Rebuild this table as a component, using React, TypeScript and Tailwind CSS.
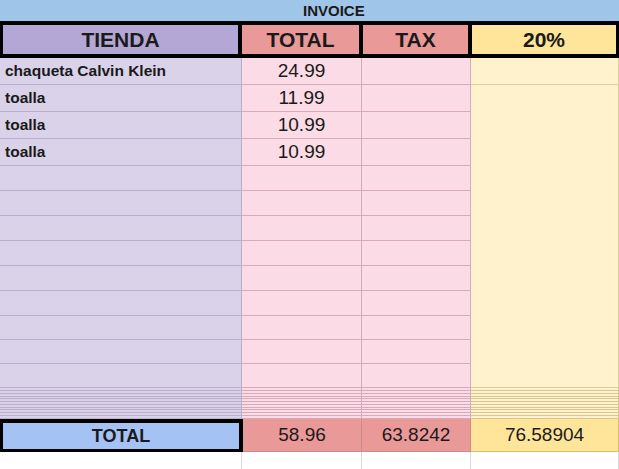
import React from "react";

const items = [
  { name: "chaqueta Calvin Klein", total: "24.99" },
  { name: "toalla", total: "11.99" },
  { name: "toalla", total: "10.99" },
  { name: "toalla", total: "10.99" },
];

// blank rows below the items, then the squashed hidden-ish rows
const blankRows = ["h-[25px]", "h-[25px]", "h-[25px]", "h-[25px]", "h-[25px]", "h-[25px]", "h-[24px]", "h-[24px]", "h-[24px]"];
const thinRows = ["h-[3px]", "h-[3px]", "h-[3px]", "h-[2px]", "h-[3px]", "h-[3px]", "h-[3px]", "h-[2px]", "h-[3px]", "h-[3px]", "h-[3px]"];

function Row({ h, name, total }: { h: string; name?: string; total?: string }) {
  return (
    <div className={`flex ${h}`}>
      <div className="flex w-[242px] items-center overflow-hidden border-r border-b border-[#b9aecb] bg-[#d9d2e9] pl-[5px] text-[15.5px] font-bold">
        {name}
      </div>
      <div className="flex w-[120px] items-center justify-center overflow-hidden border-r border-b border-[#d5abbb] bg-[#fbdbe6] text-[19px]">
        {total}
      </div>
      <div className="w-[109px] border-r border-b border-[#d5abbb] bg-[#fbdbe6]" />
    </div>
  );
}

export default function App() {
  return (
    <div className="h-[469px] w-[619px] overflow-hidden bg-white font-['Liberation_Sans',Arial,sans-serif] text-[#1a1a1a]">
      <div className="flex h-[21px] items-center bg-[#9fc5e8] pt-[1px] pl-[303px] text-[15px] font-bold">INVOICE</div>

      <div className="flex h-[37px] gap-[4px] bg-black px-[3px] py-[4px] text-[21px] font-bold">
        <div className="flex w-[235px] items-center justify-center bg-[#b4a7d6]">TIENDA</div>
        <div className="flex w-[117px] items-center justify-center bg-[#ea9999]">TOTAL</div>
        <div className="flex w-[105px] items-center justify-center bg-[#ea9999]">TAX</div>
        <div className="flex w-[144px] items-center justify-center bg-[#ffe599]">20%</div>
      </div>

      <div className="flex">
        <div className="flex w-[471px] flex-col">
          {items.map((it, i) => (
            <Row key={i} h="h-[27px]" name={it.name} total={it.total} />
          ))}
          {blankRows.map((h, i) => (
            <Row key={"b" + i} h={h} />
          ))}
          {thinRows.map((h, i) => (
            <Row key={"t" + i} h={h} />
          ))}
        </div>
        <div className="flex w-[148px] flex-col">
          <div className="h-[27px] border-r border-b border-[#dccf9f] bg-[#fff2cc]" />
          <div className="h-[303px] border-r border-b border-[#dccf9f] bg-[#fff2cc]" />
          {thinRows.map((h, i) => (
            <div key={i} className={`${h} border-r border-b border-[#d6c690] bg-[#fff2cc]`} />
          ))}
        </div>
      </div>

      <div className="flex h-[33px] text-[19px]">
        <div className="w-[243px] bg-black pt-[4px] pr-[4px] pb-[3px] pl-[3px]">
          <div className="flex h-full items-center justify-center bg-[#a4c2f4] text-[18px] font-bold">TOTAL</div>
        </div>
        <div className="flex w-[119px] items-center justify-center border-r border-b border-[#c98b8b] bg-[#ea9999]">58.96</div>
        <div className="flex w-[109px] items-center justify-center border-r border-b border-[#c98b8b] bg-[#ea9999]">63.8242</div>
        <div className="flex w-[148px] items-center justify-center border-r border-b border-[#d9be6e] bg-[#ffe599]">76.58904</div>
      </div>

      <div className="flex h-[17px]">
        <div className="w-[242px] border-r border-[#d9d9d9]" />
        <div className="w-[120px] border-r border-[#d9d9d9]" />
        <div className="w-[109px] border-r border-[#d9d9d9]" />
        <div className="w-[148px] border-r border-[#d9d9d9]" />
      </div>
    </div>
  );
}
